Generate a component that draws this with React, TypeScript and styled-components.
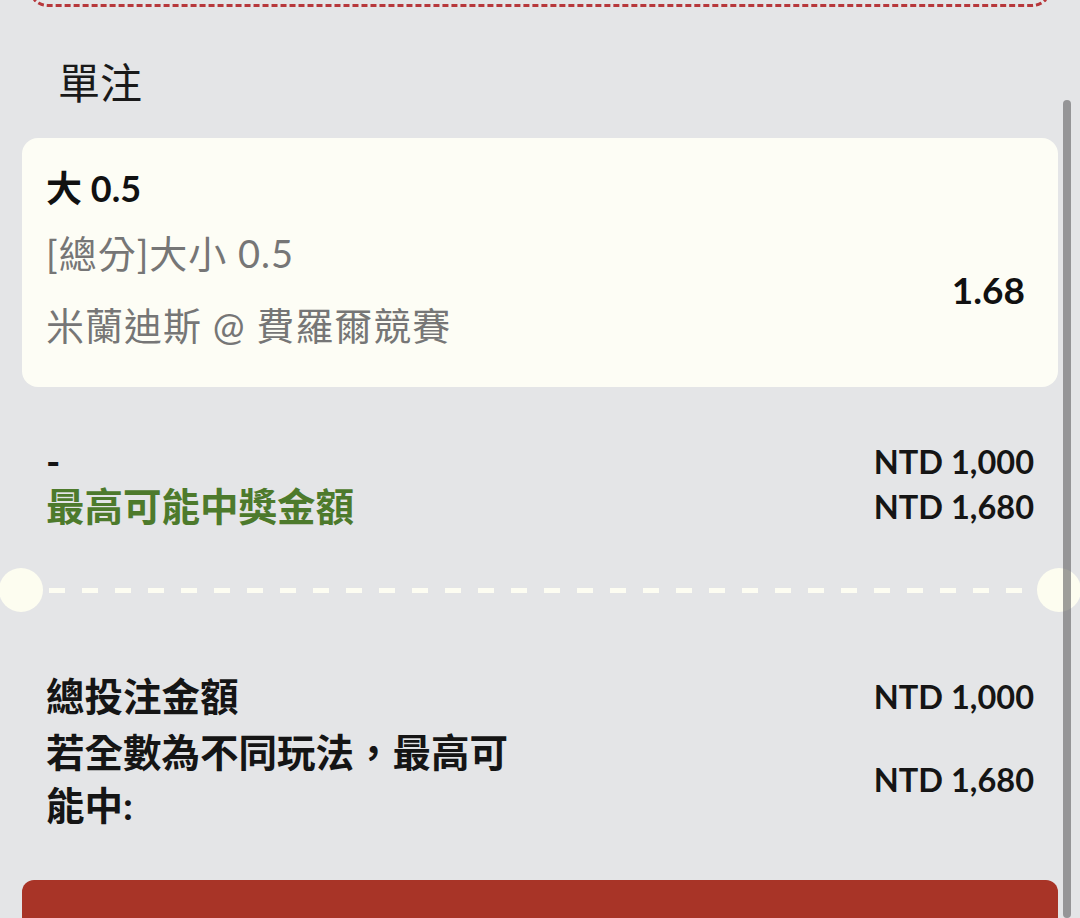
import React from "react";
import styled, { createGlobalStyle } from "styled-components";

const Global = createGlobalStyle`
  html, body {
    margin: 0;
    padding: 0;
    background: #e4e5e7;
    overflow: hidden;
  }
  body {
    font-family: "Lato", "Noto Sans CJK TC", sans-serif;
    color: #151515;
  }
`;

const Page = styled.div`
  position: relative;
  width: 1080px;
  height: 918px;
  overflow: hidden;
  background: #e4e5e7;
`;

const TopFrame = styled.div`
  margin: -24px 28px 0;
  height: 28px;
  border: 3px dashed #b7383c;
  border-top: none;
  border-radius: 0 0 20px 20px;
`;

const Header = styled.h2`
  margin: 0;
  height: 131px;
  box-sizing: border-box;
  padding: 44px 0 0 58px;
  font-size: 42px;
  line-height: 60px;
  font-weight: 400;
  color: #1a1a1a;
  font-family: "Noto Sans CJK TC", sans-serif;
`;

const Card = styled.div`
  margin: 0 22px;
  height: 249px;
  box-sizing: border-box;
  padding: 24px 33px 26px 24px;
  background: #fdfdf5;
  border-radius: 16px;
`;

const CardTitle = styled.div`
  font-size: 36px;
  line-height: 52px;
  font-weight: 700;
  color: #111;
`;

const CardBody = styled.div`
  margin-top: 3px;
  display: flex;
  align-items: center;
  justify-content: space-between;
`;

const Lines = styled.div`
  display: flex;
  flex-direction: column;
`;

const GrayLine = styled.div`
  font-size: 38px;
  letter-spacing: 1px;
  line-height: 72px;
  color: #767676;
  white-space: nowrap;
`;

const Odds = styled.div`
  font-size: 37px;
  font-weight: 700;
  color: #111;
`;

const Summary = styled.div`
  margin-top: 52px;
  padding: 0 46px;
`;

const Row = styled.div<{ $h: number; $mt?: number }>`
  display: flex;
  align-items: center;
  justify-content: space-between;
  min-height: ${(p) => p.$h}px;
  margin-top: ${(p) => p.$mt ?? 0}px;
`;

const Label = styled.div<{ $green?: boolean; $lh: number }>`
  flex: 0 0 48%;
  font-size: 38.5px;
  line-height: ${(p) => p.$lh}px;
  font-weight: 700;
  color: ${(p) => (p.$green ? "#4d7a2c" : "#151515")};
`;

const Amount = styled.div`
  font-size: 32.5px;
  font-weight: 700;
  color: #151515;
  white-space: nowrap;
`;

const Divider = styled.div`
  margin: 39px -1px 0;
  height: 44px;
  display: flex;
  align-items: center;
`;

const Notch = styled.div`
  flex: 0 0 44px;
  height: 44px;
  border-radius: 50%;
  background: #fdfdf0;
`;

const DashLine = styled.div`
  flex: 1;
  height: 5px;
  margin: 0 6px;
  background: repeating-linear-gradient(
    to right,
    #fdfdf2 0 16px,
    transparent 16px 33px
  );
`;

const Totals = styled.div`
  margin-top: 58px;
  padding: 0 46px;
`;

const SubmitBar = styled.div`
  margin: 48px 22px 0;
  height: 90px;
  background: #a83427;
  border-radius: 12px;
`;

const Scrollbar = styled.div`
  position: absolute;
  right: 9px;
  top: 100px;
  bottom: 0;
  width: 8px;
  border-radius: 4px;
  background: rgba(100, 100, 102, 0.62);
`;

export default function App() {
  return (
    <Page>
      <Global />
      <TopFrame />
      <Header>單注</Header>
      <Card>
        <CardTitle>大 0.5</CardTitle>
        <CardBody>
          <Lines>
            <GrayLine>[總分]大小 0.5</GrayLine>
            <GrayLine>米蘭迪斯 @ 費羅爾競賽</GrayLine>
          </Lines>
          <Odds>1.68</Odds>
        </CardBody>
      </Card>
      <Summary>
        <Row $h={45}>
          <Label $lh={45}>-</Label>
          <Amount>NTD 1,000</Amount>
        </Row>
        <Row $h={45}>
          <Label $green $lh={45}>最高可能中獎金額</Label>
          <Amount>NTD 1,680</Amount>
        </Row>
      </Summary>
      <Divider>
        <Notch />
        <DashLine />
        <Notch />
      </Divider>
      <Totals>
        <Row $h={53}>
          <Label $lh={53}>總投注金額</Label>
          <Amount>NTD 1,000</Amount>
        </Row>
        <Row $h={106} $mt={3}>
          <Label $lh={53}>若全數為不同玩法，最高可能中:</Label>
          <Amount>NTD 1,680</Amount>
        </Row>
      </Totals>
      <SubmitBar />
      <Scrollbar />
    </Page>
  );
}
